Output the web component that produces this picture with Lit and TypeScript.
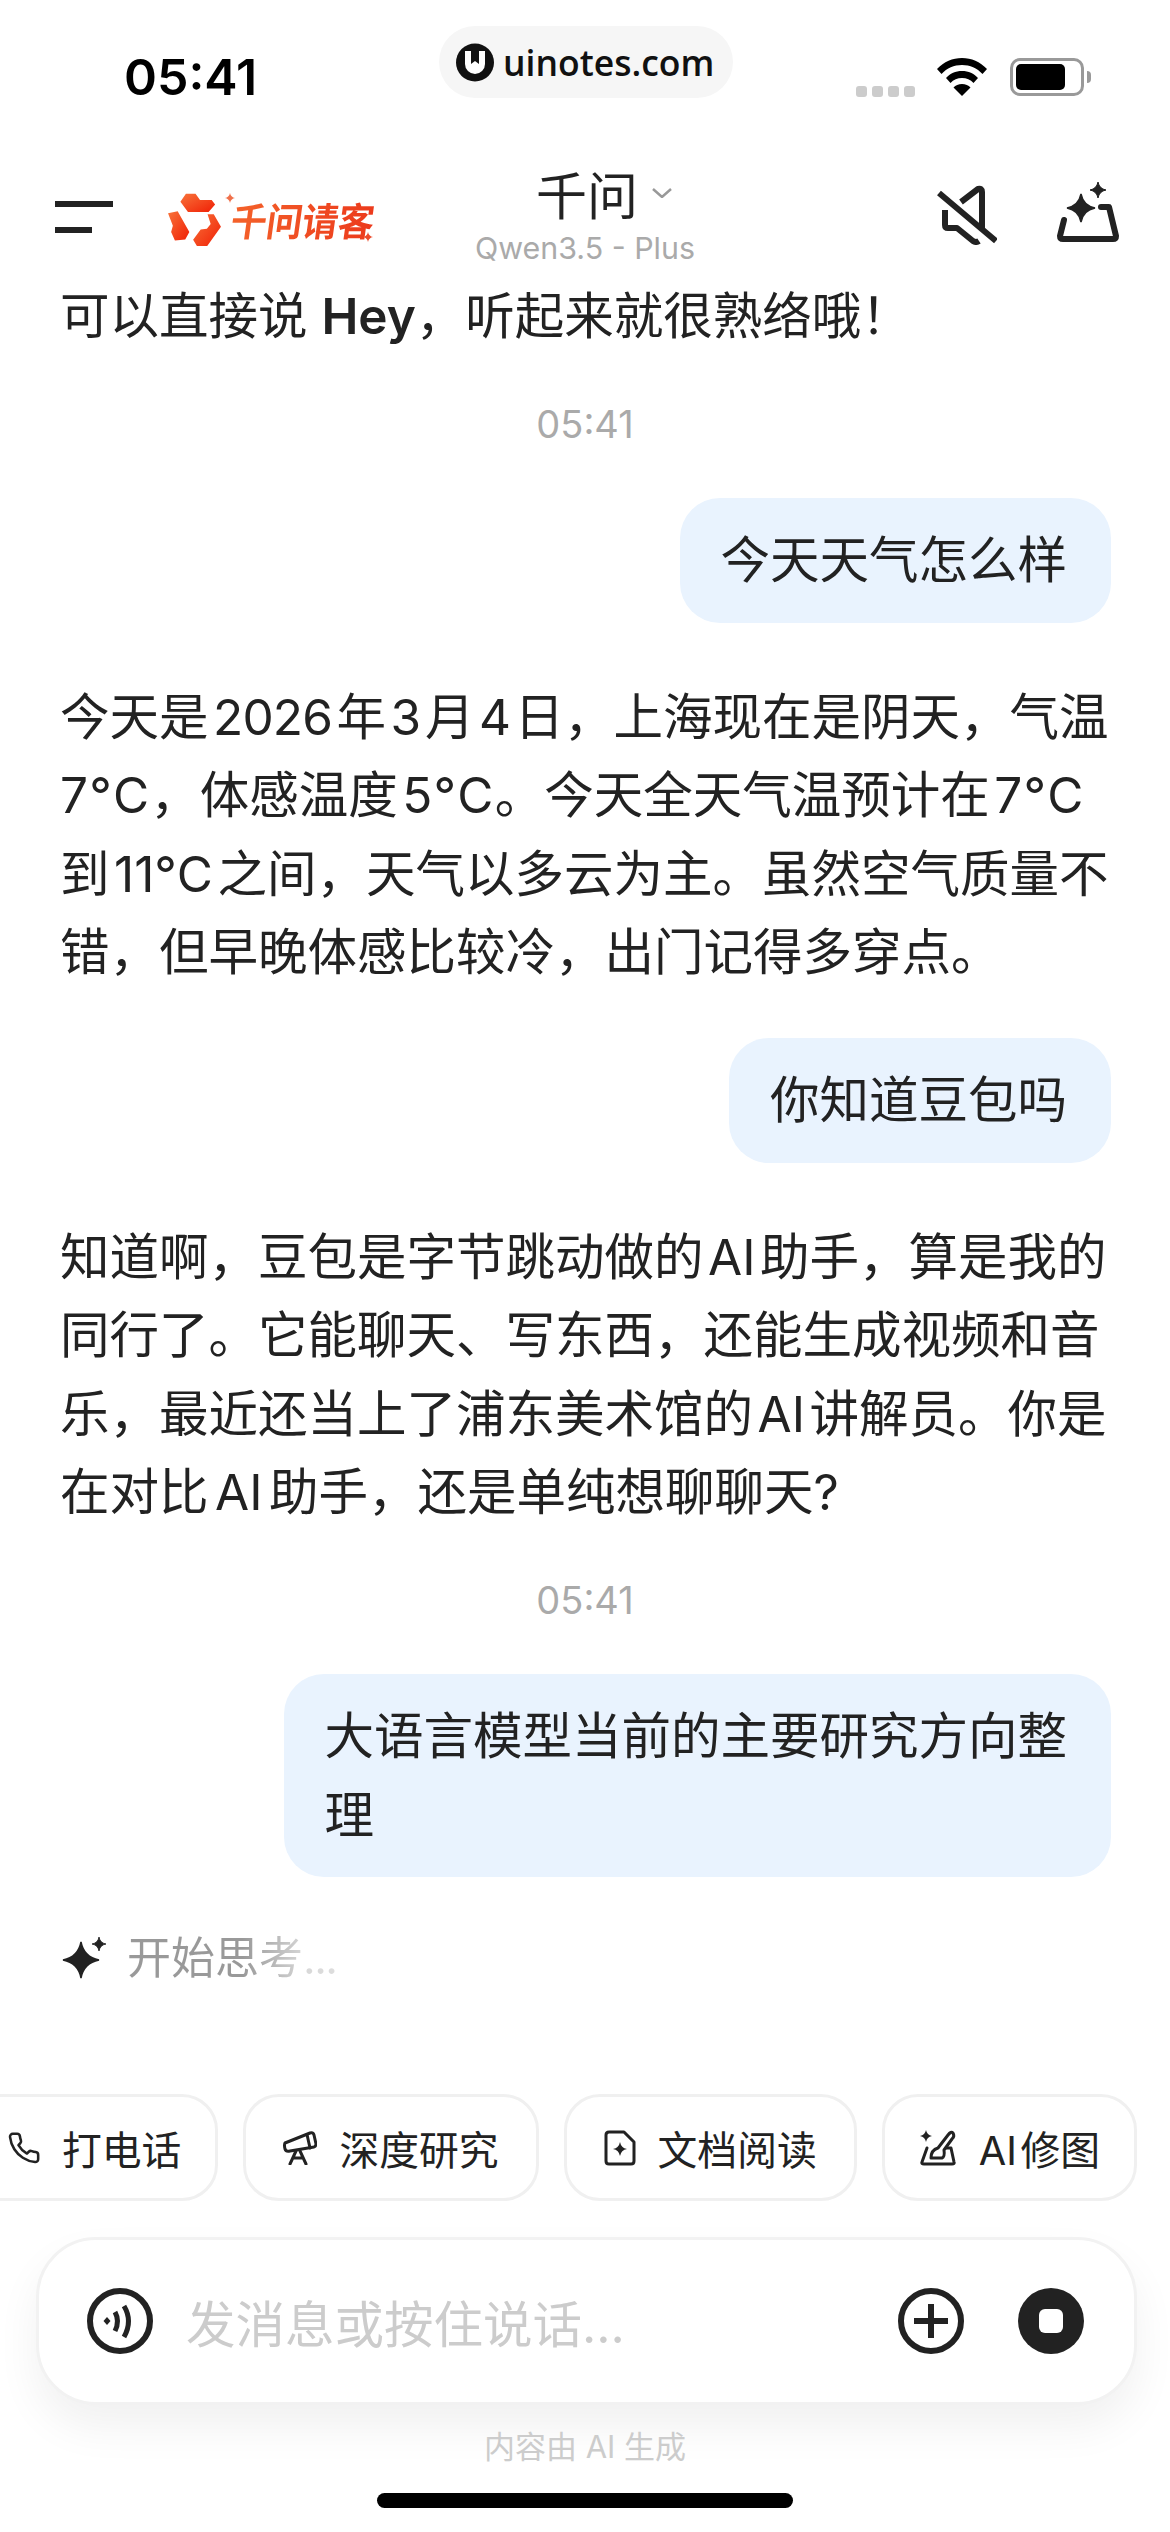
import { LitElement, html, css, svg } from "lit";
import { customElement } from "lit/decorators.js";

const star = (cx: number, cy: number, r: number) => {
  const k = r * 0.16;
  return `M${cx} ${cy - r}Q${cx + k} ${cy - k} ${cx + r} ${cy}Q${cx + k} ${cy + k} ${cx} ${cy + r}Q${cx - k} ${cy + k} ${cx - r} ${cy}Q${cx - k} ${cy - k} ${cx} ${cy - r}Z`;
};

@customElement("app-root")
export class AppRoot extends LitElement {
  static styles = css`
    :host {
      display: flex;
      flex-direction: column;
      width: 1170px;
      height: 2532px;
      overflow: hidden;
      background: #fff;
      color: #222;
      font-family: Inter, "Noto Sans CJK SC", sans-serif;
    }
    svg { display: block; flex: none; }
    .status {
      display: grid;
      grid-template-columns: 439px 294px 1fr;
      height: 170px;
      flex: none;
    }
    .time {
      padding: 47px 0 0 124px;
      font-size: 50px;
      line-height: 60px;
      font-weight: 600;
      color: #000;
    }
    .pill {
      margin-top: 26px;
      height: 72px;
      border-radius: 36px;
      background: #f6f6f6;
      display: flex;
      align-items: center;
      gap: 9px;
      padding-left: 17px;
      font-family: "Open Sans", sans-serif;
      font-weight: 600;
      font-size: 35.5px;
      color: #111;
    }
    .sys {
      display: flex;
      align-items: flex-start;
      padding: 58px 0 0 123px;
    }
    .dots { display: flex; gap: 5px; margin-top: 28px; }
    .dots i { width: 11px; height: 11px; border-radius: 3px; background: #ccc; }
    .wifi { margin-left: 22px; }
    .batt {
      margin-left: 23px;
      width: 74px;
      height: 38px;
      box-sizing: border-box;
      border: 3px solid #999;
      border-radius: 10px;
      padding: 3px;
    }
    .batt b { display: block; width: 49px; height: 100%; background: #000; border-radius: 5px; }
    .nub { width: 4px; height: 12px; margin: 13px 0 0 3px; background: #999; border-radius: 0 4px 4px 0; }
    .head {
      display: grid;
      grid-template-columns: 1fr auto 1fr;
      height: 107px;
      flex: none;
    }
    .left { display: flex; align-items: flex-start; padding-left: 55px; }
    .menu { display: flex; flex-direction: column; gap: 20px; padding-top: 31px; width: 58px; }
    .menu i { height: 6px; background: #222; display: block; }
    .menu i + i { width: 37px; }
    .logo { display: flex; margin-left: 54px; padding-top: 22px; position: relative; }
    .logotext {
      font-family: "Noto Sans CJK SC", sans-serif;
      font-weight: 700;
      font-size: 36px;
      line-height: 42px;
      margin: 6px 0 0 9px;
      letter-spacing: -.3px;
      transform: skewX(-8deg) scaleY(1.08);
      background: linear-gradient(90deg, #f4622a, #ec3a1c);
      -webkit-background-clip: text;
      background-clip: text;
      color: transparent;
    }
    .spark { position: absolute; }
    .spark1 { left: 58px; top: 23px; }
    .spark2 { left: 196px; top: 62px; }
    .mid { width: 240px; display: flex; flex-direction: column; align-items: center; }
    .title {
      display: flex;
      align-items: center;
      font-family: "Noto Sans CJK SC", sans-serif;
      font-size: 51px;
      line-height: 60px;
      margin-top: -7px;
      color: #222;
    }
    .chev { margin: 0 -38px 0 14px; }
    .sub { font-size: 30.4px; line-height: 36px; color: #aaa; margin-top: 7px; white-space: nowrap; }
    .right { display: flex; justify-content: flex-end; align-items: flex-start; padding-right: 50px; }
    .mute { margin-top: 15px; }
    .magic { margin: 12px 0 0 59px; }
    .chat {
      flex: 1;
      min-height: 0;
      padding: 0 60px;
      display: flex;
      flex-direction: column;
      font-family: Inter, "Noto Sans CJK SC", sans-serif;
      font-size: 49.5px;
      line-height: 78.4px;
      white-space: nowrap;
      color: #222;
    }
    .first b { font-weight: 600; }
    .dg { letter-spacing: -0.8px; }
    .dc { letter-spacing: 1.2px; }
    .ai { margin: 0 2px; }
    .stamp {
      align-self: center;
      font-size: 38px;
      line-height: 50px;
      color: #aaa;
    }
    .bubble {
      align-self: flex-end;
      margin-right: -1px;
      background: #e9f3fe;
      border-radius: 40px;
      padding: 23px 44px 23px 41px;
    }
    .m44 { margin-top: 44px; }
    .m49 { margin-top: 49px; }
    .m47 { margin-top: 47px; }
    .m55 { margin-top: 55px; }
    .thinking {
      display: flex;
      align-items: center;
      margin-top: 51px;
      margin-left: 2px;
      font-size: 44px;
      line-height: 60px;
      gap: 19px;
    }
    .grad {
      background: linear-gradient(90deg, #999 0, #999 55%, #d8d8d8 85%, #ddd 100%);
      -webkit-background-clip: text;
      background-clip: text;
      color: transparent;
    }
    .grad i { font-style: normal; letter-spacing: -1.5px; }
    .chips {
      flex: none;
      display: flex;
      gap: 25px;
      margin-left: -36px;
    }
    .chip {
      flex: none;
      height: 107px;
      box-sizing: border-box;
      border: 3px solid #f0f0f0;
      border-radius: 36px;
      padding: 0 37px;
      display: flex;
      align-items: center;
      gap: 22px;
      font-size: 39.8px;
      color: #222;
      white-space: nowrap;
    }
    .chip.first-chip { padding: 0 34px 0 40px; gap: 21px; }
    .chip.tight { padding: 0 34px; }
    .box {
      flex: none;
      margin: 36px 33px 0 36px;
      height: 168px;
      box-sizing: border-box;
      border: 3px solid #f2f2f2;
      border-radius: 60px;
      background: #fff;
      box-shadow: 0 22px 44px rgba(0, 0, 0, 0.06);
      display: flex;
      align-items: center;
      padding-left: 48px;
      padding-right: 50px;
    }
    .ph {
      flex: 1;
      margin-left: 33px;
      font-size: 49.5px;
      color: #ccc;
      white-space: nowrap;
    }
    .stopic { margin-left: 54px; }
    .note {
      flex: none;
      text-align: center;
      margin-top: 23px;
      font-size: 31px;
      line-height: 38px;
      color: #ccc;
    }
    .home {
      flex: none;
      width: 416px;
      height: 15px;
      border-radius: 8px;
      background: #000;
      margin: 27px auto 24px;
    }
  `;

  render() {
    const s = "\u200A";
    return html`
      <div class="status">
        <div class="time">05:41</div>
        <div class="pill">
          <svg width="38" height="39" viewBox="0 0 38 39">
            <circle cx="19" cy="19.5" r="19" fill="#111" />
            <path d="M9 8h20v13a10 10 0 0 1-20 0Z" fill="#fff" />
            <path d="M15 8h8v13l-4-3-4 3Z" fill="#111" />
          </svg>
          <span>uinotes.com</span>
        </div>
        <div class="sys">
          <div class="dots"><i></i><i></i><i></i><i></i></div>
          <svg class="wifi" width="50" height="38" viewBox="0 0 50 38">
            <path d="M25 0C15.500 0 7 3.700 0 11l4.500 5C10 10 17 7 25 7s15 3 20.500 9l4.500-5C43 3.700 34.500 0 25 0Z" fill="#000" />
            <path d="M25 13c-6.500 0-12 2.500-16 7l4.500 5c3-3.300 7-5 11.500-5s8.500 1.700 11.500 5l4.500-5c-4-4.500-9.500-7-16-7Z" fill="#000" />
            <path d="M25 26c-3.500 0-6.500 1.300-8.500 3.500L25 38l8.500-8.500C31.500 27.300 28.500 26 25 26Z" fill="#000" />
          </svg>
          <div class="batt"><b></b></div>
          <div class="nub"></div>
        </div>
      </div>

      <div class="head">
        <div class="left">
          <div class="menu"><i></i><i></i></div>
          <div class="logo">
            <svg width="55" height="55" viewBox="50 65 160 160">
              <defs>
                <linearGradient id="lg" x1="0" y1="0" x2="1" y2="1">
                  <stop offset="0" stop-color="#f8733a" />
                  <stop offset="1" stop-color="#f01f05" />
                </linearGradient>
              </defs>
              <path d="M105 70h28l13 18h34l10 13-19 22h-60l-22-30Z" fill="url(#lg)" />
              <path d="M53 127l28-6 34 60-12 22-30 3-11-25 5-18Z" fill="url(#lg)" />
              <path d="M168 130h18l21 36-40 56h-30l-11-18 22-30 18-2 11-14Z" fill="url(#lg)" />
            </svg>
            <span class="logotext">千问请客</span>
            <svg class="spark spark1" width="10" height="10" viewBox="0 0 10 10"><path d="${star(5, 5, 5)}" fill="#f0704a" /></svg>
            <svg class="spark spark2" width="10" height="10" viewBox="0 0 10 10"><path d="${star(5, 5, 5)}" fill="#ec4a2a" /></svg>
          </div>
        </div>
        <div class="mid">
          <div class="title">
            <span>千问</span>
            <svg class="chev" width="20" height="10" viewBox="0 0 20 10">
              <path d="M1 1l9 8 9-8" fill="none" stroke="#999" stroke-width="2.500" />
            </svg>
          </div>
          <div class="sub">Qwen3.5 - Plus</div>
        </div>
        <div class="right">
          <svg class="mute" width="60" height="60" viewBox="0 0 60 60" fill="none" stroke="#222" stroke-width="6" stroke-linejoin="round">
            <path d="M2 8 59 56" />
            <path d="M24 17 41 4Q45 3 45 7V45" />
            <path d="M8 25V40Q8 43 11 43H20L36 56Q39 58 42 56" />
          </svg>
          <svg class="magic" width="64" height="62" viewBox="0 0 64 62">
            <path d="M45 25H53L60 54Q60 57 57 57H7Q4 57 4 54L8 38" fill="none" stroke="#222" stroke-width="6" stroke-linejoin="round" stroke-linecap="round" />
            <path d="${star(25, 26, 14)}" fill="#222" stroke="#222" stroke-width="1.500" />
            <path d="${star(42, 8, 8)}" fill="#222" stroke="#222" stroke-width="1" />
          </svg>
        </div>
      </div>

      <div class="chat">
        <div class="first">可以直接说 <b>Hey</b>，听起来就很熟络哦！</div>
        <div class="stamp m44">05:41</div>
        <div class="bubble m49">今天天气怎么样</div>
        <div class="m55">
          今天是${s}<span class="dg">2026</span>${s}年${s}<span class="dg">3</span>${s}月${s}<span class="dg">4</span>${s}日，上海现在是阴天，气温<br />
          <span class="dc">7°C</span>，体感温度${s}<span class="dc">5°C</span>。今天全天气温预计在${s}<span class="dc">7°C</span><br />
          到${s}11°C${s}之间，天气以多云为主。虽然空气质量不<br />
          错，但早晚体感比较冷，出门记得多穿点。
        </div>
        <div class="bubble m47">你知道豆包吗</div>
        <div class="m55">
          知道啊，豆包是字节跳动做的${s}AI${s}助手，算是我的<br />
          同行了。它能聊天、写东西，还能生成视频和音<br />
          乐，最近还当上了浦东美术馆的${s}AI${s}讲解员。你是<br />
          在对比${s}<span class="ai">AI</span>${s}助手，还是单纯想聊聊天?
        </div>
        <div class="stamp m44">05:41</div>
        <div class="bubble m49">大语言模型当前的主要研究方向整<br />理</div>
        <div class="thinking">
          <svg width="46" height="46" viewBox="0 0 46 46">
            <path d="${star(19, 25, 18)}" fill="#222" stroke="#222" stroke-width="1.500" />
            <path d="${star(37, 9, 7)}" fill="#222" stroke="#222" stroke-width=".8" />
          </svg>
          <span class="grad">开始思考<i>...</i></span>
        </div>
      </div>

      <div class="chips">
        <div class="chip first-chip">
          <svg width="34" height="34" viewBox="0 0 24 24" fill="none" stroke="#222" stroke-width="1.800" stroke-linejoin="round">
            <path d="M22 16.920v3a2 2 0 0 1-2.180 2 19.790 19.790 0 0 1-8.630-3.070 19.500 19.500 0 0 1-6-6 19.790 19.790 0 0 1-3.070-8.670A2 2 0 0 1 4.110 2h3a2 2 0 0 1 2 1.720 12.840 12.840 0 0 0 .7 2.810 2 2 0 0 1-.45 2.110L8.090 9.910a16 16 0 0 0 6 6l1.270-1.270a2 2 0 0 1 2.110-.45 12.840 12.840 0 0 0 2.810.7A2 2 0 0 1 22 16.920z" />
          </svg>
          <span>打电话</span>
        </div>
        <div class="chip">
          <svg width="34" height="34" viewBox="0 0 34 34" fill="none" stroke="#222" stroke-width="3" stroke-linejoin="round" stroke-linecap="round">
            <path d="M2 12 27 2Q30 1 31 4L33 13Q33 15 31 16L7 20Q3 21 2 18Q1 14 2 12Z" />
            <path d="M24 3.500 27 17" />
            <path d="M13 20 7 33M17 20 23 33M10 27H20" />
          </svg>
          <span>深度研究</span>
        </div>
        <div class="chip">
          <svg width="32" height="36" viewBox="0 0 32 36" fill="none" stroke="#222" stroke-width="3" stroke-linejoin="round">
            <path d="M5 2H20L30 12V31Q30 34 27 34H5Q2 34 2 31V5Q2 2 5 2Z" />
            <path d="${star(16, 19, 7)}" fill="#222" stroke="none" />
          </svg>
          <span>文档阅读</span>
        </div>
        <div class="chip tight">
          <svg width="38" height="36" viewBox="0 0 38 36" fill="none" stroke="#222" stroke-width="3" stroke-linejoin="round" stroke-linecap="round">
            <path d="M8 18 3 32Q2 34 5 34H33Q36 34 35 32L32 18H27" />
            <path d="M12 28Q12 20 19 18L29 5Q32 1 34 3Q36 6 33 9L25 20Q26 27 23 28Z" />
            <path d="${star(7, 6, 6)}" fill="#222" stroke="none" />
          </svg>
          <span>AI${s}修图</span>
        </div>
      </div>

      <div class="box">
        <svg width="66" height="66" viewBox="0 0 66 66" fill="none" stroke="#222">
          <circle cx="33" cy="33" r="30" stroke-width="6" />
          <path d="M20 29l3.500 4-3.500 4-3.500-4Z" fill="#222" stroke="none" />
          <path d="M28 24Q33 33 28 43" stroke-width="5" />
          <path d="M37 18Q46 33 37 49" stroke-width="5" />
        </svg>
        <div class="ph">发消息或按住说话...</div>
        <svg width="66" height="66" viewBox="0 0 66 66" fill="none" stroke="#222" stroke-width="6">
          <circle cx="33" cy="33" r="30" />
          <path d="M33 16V50M16 33H50" />
        </svg>
        <svg class="stopic" width="66" height="66" viewBox="0 0 66 66">
          <circle cx="33" cy="33" r="33" fill="#222" />
          <rect x="21" y="21" width="24" height="24" rx="6" fill="#fff" />
        </svg>
      </div>

      <div class="note">内容由 AI 生成</div>
      <div class="home"></div>
    `;
  }
}
